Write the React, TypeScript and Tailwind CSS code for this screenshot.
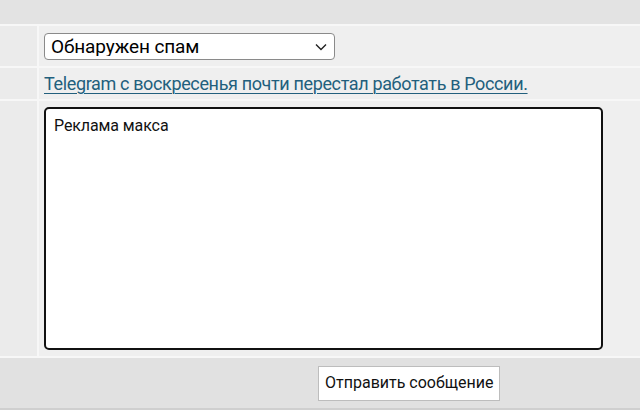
import { useState } from 'react'

const font = { fontFamily: 'Roboto, "Noto Sans", Arial, sans-serif' }

function Row({ children, className = '' }: { children: React.ReactNode; className?: string }) {
  return (
    <div className="flex border-b-2 border-[#f7f7f7]">
      <div className="w-[39px] shrink-0 bg-[#ebebeb] border-r-2 border-[#f7f7f7]" />
      <div className={`flex-1 bg-[#efefef] pl-[5px] pr-[37px] ${className}`}>{children}</div>
    </div>
  )
}

export default function App() {
  const [reason, setReason] = useState('spam')
  const [text, setText] = useState('Реклама макса')

  return (
    <div className="w-[640px] h-[413px] bg-white overflow-hidden" style={font}>
      <div className="h-[26px] bg-[#e3e3e3] border-b-2 border-[#f7f7f7]" />

      <Row className="h-[40px] flex items-center">
        <div className="relative w-[291px] h-[27px]">
          <select
            value={reason}
            onChange={(e) => setReason(e.target.value)}
            className="appearance-none w-full h-full bg-white border border-[#8a8a8a] rounded-[4px] pl-[6px] pr-6 text-[19px] tracking-[-0.1px] text-black leading-none outline-none"
            style={font}
          >
            <option value="spam">Обнаружен спам</option>
            <option value="abuse">Оскорбления</option>
            <option value="other">Другое</option>
          </select>
          <svg
            className="absolute right-[8px] top-[10px] pointer-events-none"
            width="12"
            height="8"
            viewBox="0 0 12 8"
            fill="none"
          >
            <path d="M1 1.5l5 5 5-5" stroke="#222" strokeWidth="1.4" />
          </svg>
        </div>
      </Row>

      <Row className="h-[31px] flex items-center">
        <a href="#" className="text-[18px] tracking-[-0.36px] text-[#225f7d] underline underline-offset-[3px] decoration-1 leading-none">
          Telegram с воскресенья почти перестал работать в России.
        </a>
      </Row>

      <Row className="h-[255px] pt-[6px]">
        <textarea
          value={text}
          onChange={(e) => setText(e.target.value)}
          className="block w-[559px] h-[243px] bg-white border-2 border-[#111] rounded-[5px] px-[8px] py-[7px] text-[16px] tracking-[-0.1px] text-[#111] leading-[20px] resize-none outline-none"
          style={font}
        />
      </Row>

      <div className="h-[52px] bg-[#e1e1e1] border-b-2 border-[#cfcfcf] flex items-center pl-[318px]">
        <button
          className="h-[35px] px-[6px] bg-white border border-[#bdbdbd] text-[16px] text-[#111]"
          style={font}
        >
          Отправить сообщение
        </button>
      </div>
    </div>
  )
}
